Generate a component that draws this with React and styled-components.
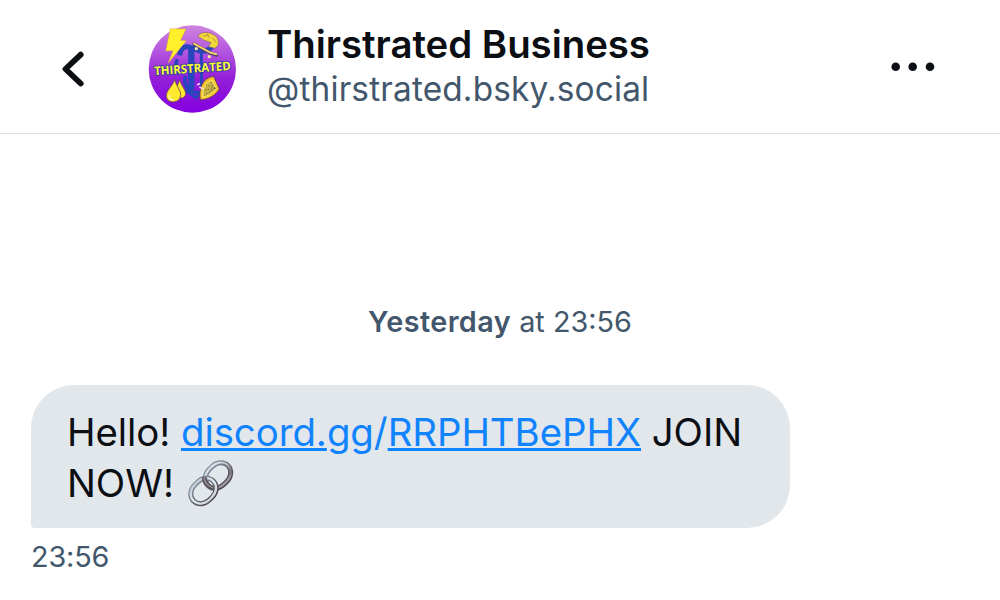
import React from "react";
import styled, { createGlobalStyle } from "styled-components";

const GlobalStyle = createGlobalStyle`
  body {
    margin: 0;
    background: #ffffff;
    font-family: Inter, "Liberation Sans", sans-serif;
    font-kerning: normal;
  }
`;

const Screen = styled.div`
  display: flex;
  flex-direction: column;
  width: 1000px;
  height: 600px;
  overflow: hidden;
  background: #ffffff;
`;

const Header = styled.header`
  display: flex;
  align-items: flex-start;
  box-sizing: border-box;
  height: 134px;
  padding: 25px 64px 0 60px;
  border-bottom: 1px solid #dcdfe2;
`;

const IconButton = styled.button`
  display: flex;
  padding: 0;
  border: 0;
  background: transparent;
  margin-top: ${(props) => props.$top}px;
`;

const AvatarSvg = styled.svg`
  display: block;
  width: 88px;
  height: 88px;
  margin-left: 62px;
`;

const Names = styled.div`
  flex: 1;
  margin-left: 31px;
  white-space: nowrap;
`;

const Title = styled.h1`
  margin: 0;
  font-size: 38.4px;
  font-weight: 600;
  line-height: 39px;
  letter-spacing: -0.03px;
  color: #0b0f14;
`;

const Handle = styled.div`
  margin-top: 2px;
  font-size: 33.4px;
  line-height: 46px;
  letter-spacing: 0.16px;
  color: #42576c;
`;

const Messages = styled.main`
  display: flex;
  flex-direction: column;
  align-items: flex-start;
  padding: 168px 31px 0;
`;

const DateLine = styled.div`
  align-self: center;
  font-size: 28.8px;
  line-height: 40px;
  color: #42576c;

  b {
    font-weight: 600;
    letter-spacing: 0.42px;
  }
`;

const Bubble = styled.div`
  box-sizing: border-box;
  width: 759px;
  height: 143px;
  margin-top: 43px;
  padding: 22px 36px 19px;
  border-radius: 43px 43px 43px 4px;
  background: #e2e7ec;
  font-size: 38.4px;
  line-height: 51px;
  letter-spacing: -0.06px;
  color: #0b0f14;
`;

const MessageLine = styled.div`
  display: flex;
  height: 51px;
  white-space: pre;
`;

const Link = styled.a`
  color: #1083fe;
`;

const Underlined = styled.span`
  text-decoration: underline;
  text-decoration-thickness: 3px;
  text-decoration-skip-ink: none;
  text-underline-offset: 2px;
`;

const ChainSvg = styled.svg`
  width: 51px;
  height: 51px;
  margin-left: 1px;
`;

const Time = styled.div`
  margin-top: 9px;
  font-size: 28.8px;
  line-height: 40px;
  letter-spacing: -0.15px;
  color: #42576c;
`;

const Avatar = () => (
  <AvatarSvg viewBox="24 15 264 264">
    <defs>
      <linearGradient id="disc" x1="0" y1="0" x2="0" y2="1">
        <stop offset="0" stopColor="#cf83df" />
        <stop offset="0.3" stopColor="#b356df" />
        <stop offset="0.6" stopColor="#9420d8" />
        <stop offset="1" stopColor="#8500e0" />
      </linearGradient>
    </defs>
    <circle cx="157" cy="147" r="131" fill="url(#disc)" />
    {/* blackletter T */}
    <g fill="none" stroke="#2746bd" strokeLinecap="butt">
      <path d="M119 106C124 70 148 78 171 90C190 99 205 92 219 76" strokeWidth="15" />
      <path d="M154 82V208" strokeWidth="19" />
      <path d="M184 98V200" strokeWidth="9" />
      <path d="M112 118C105 134 106 150 110 164" strokeWidth="11" />
      <path d="M137 168C128 196 146 216 173 218C188 219 196 212 202 202" strokeWidth="11" />
      <path d="M128 209L150 220L168 234L182 219" strokeWidth="8" />
    </g>
    {/* lightning bolt */}
    <path d="M91 26L138 27L122 61L139 62L84 130L99 92L77 93Z" fill="#fff02a" stroke="#d9a04b" strokeWidth="1.5" />
    {/* fish and skateboard */}
    <path d="M173 48C184 34 207 35 218 43C231 47 238 61 234 76L225 85L205 80L213 68L191 60Z" fill="#f1d93c" stroke="#8c5c72" strokeWidth="2" />
    <path d="M188 48L205 46M201 40L208 53M219 55L228 67" stroke="#b99445" strokeWidth="3" fill="none" />
    <path d="M162 72L177 80L211 99L229 105" fill="none" stroke="#4b3c65" strokeWidth="10" strokeLinecap="round" />
    <path d="M162 71L177 79L211 98L229 103" fill="none" stroke="#f4d36c" strokeWidth="6" strokeLinecap="round" />
    <circle cx="169" cy="86" r="5" fill="#f6e6a2" />
    <circle cx="208" cy="110" r="5" fill="#f6e6a2" />
    {/* drops */}
    <g fill="#ffe82e" stroke="#6a4560" strokeWidth="2.5">
      <path d="M119 179C123 196 138 210 137 223C133 239 113 237 108 222C104 208 114 195 119 179Z" />
      <path d="M104 178C108 197 123 211 122 226C121 251 82 252 79 230C77 211 100 197 104 178Z" />
    </g>
    <path d="M87 225C87 236 94 240 101 240" fill="none" stroke="#fffbd0" strokeWidth="4" />
    {/* citrus slice */}
    <path d="M181 240C176 207 186 174 221 169L238 207C227 226 206 238 181 240Z" fill="#f7c62d" stroke="#5a3550" strokeWidth="2.5" />
    <path d="M189 231C186 208 196 187 217 181L228 206C218 221 204 229 189 231Z" fill="#c9b440" stroke="#f9ed73" strokeWidth="3" />
    <path d="M226 205L193 225M226 205L190 211M226 205L198 194M226 205L211 186" stroke="#6d6346" strokeWidth="2.5" strokeDasharray="5 4" />
    <path d="M173 194L178 191M180 202L188 206" stroke="#f4d1ef" strokeWidth="5" strokeLinecap="round" />
    <text
      x="157"
      y="158"
      textAnchor="middle"
      textLength="230"
      lengthAdjust="spacingAndGlyphs"
      transform="rotate(-4 157 145)"
      fill="#ffff38"
      stroke="#293c9d"
      strokeWidth="5"
      strokeLinejoin="round"
      paintOrder="stroke"
      fontFamily="Open Sans, sans-serif"
      fontWeight="700"
      fontSize="36"
    >
      THIRSTRATED
    </text>
  </AvatarSvg>
);

const Chain = () => (
  <ChainSvg viewBox="0 0 51 51" fill="none">
    <defs>
      <linearGradient id="upper" x1="0" y1="0" x2="0" y2="1">
        <stop offset="0" stopColor="#dde3e9" />
        <stop offset="0.45" stopColor="#b5b6bd" />
        <stop offset="0.8" stopColor="#776e76" />
        <stop offset="1" stopColor="#a09fa6" />
      </linearGradient>
      <linearGradient id="lower" x1="0" y1="0" x2="0" y2="1">
        <stop offset="0" stopColor="#c5ced8" />
        <stop offset="0.5" stopColor="#e4eaf0" />
        <stop offset="1" stopColor="#d3d7dd" />
      </linearGradient>
      <linearGradient id="rim" x1="0" y1="0" x2="0" y2="1">
        <stop offset="0" stopColor="#7f8c9b" />
        <stop offset="1" stopColor="#4e484f" />
      </linearGradient>
    </defs>
    <g transform="rotate(-45 32 17.5)">
      <rect x="18" y="7" width="28" height="21" rx="12" ry="10.5" stroke="url(#rim)" strokeWidth="5" />
      <rect x="18.2" y="6.8" width="28" height="21" rx="12" ry="10.5" stroke="url(#upper)" strokeWidth="2.2" />
    </g>
    <g transform="rotate(-45 17.5 33)">
      <rect x="3.5" y="22.5" width="28" height="21" rx="12" ry="10.5" stroke="url(#rim)" strokeWidth="5" />
      <rect x="3.5" y="22.3" width="28" height="21" rx="12" ry="10.5" stroke="url(#lower)" strokeWidth="2.3" />
    </g>
    {/* the upper link passes over the lower one */}
    <path d="M18.4 19C18 24 21 28 27 30.5" stroke="#5a5359" strokeWidth="4.8" />
    <path d="M18.2 19C18 24 21 27.5 27 30" stroke="#9b969e" strokeWidth="1.3" />
  </ChainSvg>
);

const App = () => {
  return (
    <>
      <GlobalStyle />
      <Screen>
        <Header>
          <IconButton $top={25} aria-label="Back">
            <svg width="26" height="38" viewBox="0 0 26 38" fill="none">
              <path d="M20.7 4.7L5.5 19L20.7 33.5" stroke="#0b0f14" strokeWidth="5.8" strokeLinecap="round" strokeLinejoin="round" />
            </svg>
          </IconButton>
          <Avatar />
          <Names>
            <Title>Thirstrated Business</Title>
            <Handle>@thirstrated.bsky.social</Handle>
          </Names>
          <IconButton $top={35} aria-label="More options">
            <svg width="46" height="14" viewBox="0 0 46 14" fill="#0b0f14">
              <circle cx="5.7" cy="6.7" r="4.3" />
              <circle cx="22.7" cy="6.7" r="4.3" />
              <circle cx="40" cy="6.7" r="4.3" />
            </svg>
          </IconButton>
        </Header>
        <Messages>
          <DateLine>
            <b>Yesterday</b> at 23:56
          </DateLine>
          <Bubble>
            <MessageLine>
              <span>Hello! </span>
              <Link>
                <Underlined>discord.</Underlined>gg/<Underlined>RRPHTBePHX</Underlined>
              </Link>
              <span> JOIN</span>
            </MessageLine>
            <MessageLine>
              <span>NOW! </span>
              <Chain />
            </MessageLine>
          </Bubble>
          <Time>23:56</Time>
        </Messages>
      </Screen>
    </>
  );
};

export default App;
